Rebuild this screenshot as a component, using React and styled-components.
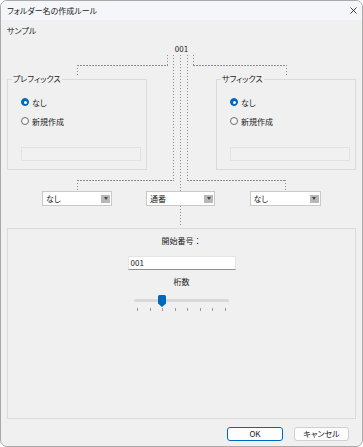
import React from 'react';
import styled, { createGlobalStyle } from 'styled-components';

const GlobalStyle = createGlobalStyle`
  html, body { margin: 0; padding: 0; background: #ffffff; }
  body {
    font-family: "Noto Sans CJK JP", "Noto Sans", sans-serif;
    font-size: 8px;
    color: #1b1b1b;
    font-feature-settings: "palt";
  }
  * { box-sizing: border-box; }
`;

const Window = styled.div`
  width: 363px;
  height: 447px;
  border: 1px solid #a9a9a9;
  border-radius: 7px;
  background: #f0f0f0;
  overflow: hidden;
  display: flex;
  flex-direction: column;
`;

const TitleBar = styled.div`
  height: 19px;
  flex: none;
  display: flex;
  align-items: center;
  justify-content: space-between;
  padding: 0 5px 0 6px;
  background: #f4f6f9;
  line-height: 10px;
`;

const CloseIcon = styled.svg`
  width: 7px;
  height: 7px;
  display: block;
`;

const Body = styled.div`
  flex: 1;
  display: flex;
  flex-direction: column;
  padding: 0 6px;
  min-height: 0;
`;

const SectionLabel = styled.div`
  margin-top: 6px;
  line-height: 10px;
`;

const Diagram = styled.div`
  position: relative;
  display: flex;
  flex-direction: column;
  padding-bottom: 22px;
`;

const Wires = styled.svg`
  position: absolute;
  left: 0;
  top: 0;
  width: 100%;
  height: 100%;
  pointer-events: none;
  overflow: visible;
`;

const SampleValue = styled.div`
  margin-top: 8px;
  line-height: 10px;
  text-align: center;
`;

const GroupsRow = styled.div`
  margin-top: 20px;
  display: flex;
  justify-content: space-between;
`;

const Group = styled.fieldset`
  width: 140px;
  height: 96px;
  margin: 0;
  padding: 0;
  min-width: 0;
  border: 1px solid #dadada;
`;

const Legend = styled.legend`
  margin-left: 4px;
  padding: 0 1px;
  line-height: 10px;
`;

const GroupContent = styled.div`
  padding: 12px 0 0 13px;
  display: flex;
  flex-direction: column;
`;

const RadioRow = styled.div`
  height: 12px;
  display: flex;
  align-items: center;
  gap: 3px;
  & + & { margin-top: 7px; }
`;

const RadioDot = styled.span`
  width: 8px;
  height: 8px;
  border-radius: 50%;
  flex: none;
  background: ${p => (p.$checked ? '#0067c0' : '#f7f7f7')};
  border: 1px solid ${p => (p.$checked ? '#0067c0' : '#6b6b6b')};
  display: flex;
  align-items: center;
  justify-content: center;
  &::after {
    content: '';
    display: ${p => (p.$checked ? 'block' : 'none')};
    width: 3px;
    height: 3px;
    border-radius: 50%;
    background: #ffffff;
  }
`;

const DisabledInput = styled.div`
  margin-top: 20px;
  width: 120px;
  height: 14px;
  border: 1px solid #e2e2e2;
  background: #f1f1f1;
`;

const DropRow = styled.div`
  margin-top: 21px;
  display: grid;
  grid-template-columns: 140px 1fr 140px;
`;

const Select = styled.div`
  justify-self: center;
  width: ${p => p.$w || 70}px;
  height: 15px;
  background: #ffffff;
  border: 1px solid #c9c9c9;
  display: flex;
  align-items: center;
  justify-content: space-between;
  padding: 0 1px 0 3px;
  line-height: 10px;
  transform: translateX(${p => p.$dx || 0}px);
`;

const SelectArrow = styled.span`
  width: 9px;
  height: 8px;
  background: #b8b8b8;
  display: flex;
  align-items: center;
  justify-content: center;
  &::after {
    content: '';
    border-left: 2.5px solid transparent;
    border-right: 2.5px solid transparent;
    border-top: 3px solid #4a4a4a;
  }
`;

const Panel = styled.div`
  flex: 1;
  border: 1px solid #dadada;
  display: flex;
  flex-direction: column;
  align-items: center;
`;

const PanelLabel = styled.div`
  margin-top: ${p => p.$mt}px;
  line-height: 10px;
  font-feature-settings: ${p => (p.$full ? 'normal' : '"palt"')};
`;

const TextInput = styled.div`
  margin-top: 10px;
  width: 108px;
  height: 14px;
  background: #ffffff;
  border: 1px solid #e4e4e4;
  border-bottom-color: #8f8f8f;
  padding-left: 2px;
  line-height: 12px;
`;

const Slider = styled.div`
  margin-top: 8px;
  width: 95px;
  height: 17px;
  position: relative;
`;

const Track = styled.div`
  margin-top: 4px;
  height: 3px;
  border-radius: 2px;
  background: #d8d8d8;
`;

const Ticks = styled.div`
  margin-top: 6px;
  padding: 0 3px;
  display: flex;
  justify-content: space-between;
`;

const Tick = styled.span`
  width: 1px;
  height: 3px;
  background: #9a9a9a;
`;

const Thumb = styled.svg`
  position: absolute;
  top: 0;
  width: 8px;
  height: 12px;
`;

const Footer = styled.div`
  flex: none;
  display: flex;
  justify-content: flex-end;
  gap: 11px;
  padding: 8px 7px 5px 0;
`;

const Button = styled.button`
  width: ${p => p.$w}px;
  height: 14px;
  margin: 0;
  padding: 0;
  font: inherit;
  font-size: 8px;
  line-height: 10px;
  color: #1b1b1b;
  background: #fdfdfd;
  border: 1px solid ${p => (p.$primary ? '#0067c0' : '#d0d0d0')};
  border-radius: 3px;
`;

function Radio({ checked, children }) {
  return (
    <RadioRow>
      <RadioDot $checked={checked} />
      <span>{children}</span>
    </RadioRow>
  );
}

function Dropdown({ value, w, dx }) {
  return (
    <Select $w={w} $dx={dx}>
      <span>{value}</span>
      <SelectArrow />
    </Select>
  );
}

function Connectors() {
  const V = (x, y1, y2) => (
    <line x1={x + 0.5} y1={y1} x2={x + 0.5} y2={y2} strokeDasharray="1 2" />
  );
  const H = (y, x1, x2) => (
    <line x1={x1} y1={y + 0.5} x2={x2} y2={y + 0.5} strokeDasharray="2 1" />
  );
  return (
    <Wires stroke="#8c8c8c" strokeWidth="1" shapeRendering="crispEdges" fill="none">
      {V(160, 19, 29)}
      {V(186, 19, 29)}
      {H(29, 70, 161)}
      {H(29, 186, 280)}
      {V(70, 29, 40)}
      {V(279, 29, 40)}
      {V(166, 19, 145)}
      {V(180, 19, 145)}
      {V(173, 19, 155)}
      {V(173, 170, 189)}
      {H(144, 70, 167)}
      {H(144, 180, 279)}
      {V(70, 144, 155)}
      {V(278, 144, 155)}
    </Wires>
  );
}

export default function App() {
  const ticks = Array.from({ length: 8 });
  const sliderValue = 2;
  const thumbLeft = 3 + (sliderValue * 87) / 7 - 3.5;
  return (
    <>
      <GlobalStyle />
      <Window>
        <TitleBar>
          <span>フォルダー名の作成ルール</span>
          <CloseIcon viewBox="0 0 7 7">
            <path d="M0.5 0.5 L6.5 6.5 M6.5 0.5 L0.5 6.5" stroke="#2b2b2b" strokeWidth="0.9" />
          </CloseIcon>
        </TitleBar>
        <Body>
          <SectionLabel>サンプル</SectionLabel>
          <Diagram>
            <Connectors />
            <SampleValue>001</SampleValue>
            <GroupsRow>
              <Group>
                <Legend>プレフィックス</Legend>
                <GroupContent>
                  <Radio checked>なし</Radio>
                  <Radio>新規作成</Radio>
                  <DisabledInput />
                </GroupContent>
              </Group>
              <Group>
                <Legend>サフィックス</Legend>
                <GroupContent>
                  <Radio checked>なし</Radio>
                  <Radio>新規作成</Radio>
                  <DisabledInput />
                </GroupContent>
              </Group>
            </GroupsRow>
            <DropRow>
              <Dropdown value="なし" w={70} />
              <Dropdown value="通番" w={69} dx={-1} />
              <Dropdown value="なし" w={71} dx={-1} />
            </DropRow>
          </Diagram>
          <Panel>
            <PanelLabel $mt={7} $full>開始番号：</PanelLabel>
            <TextInput>001</TextInput>
            <PanelLabel $mt={7}>桁数</PanelLabel>
            <Slider>
              <Track />
              <Ticks>
                {ticks.map((_, i) => (
                  <Tick key={i} />
                ))}
              </Ticks>
              <Thumb viewBox="0 0 8 12" style={{ left: `${thumbLeft}px` }}>
                <path d="M1.5 0 H6.5 A1.5 1.5 0 0 1 8 1.5 V8.5 L4 12 L0 8.5 V1.5 A1.5 1.5 0 0 1 1.5 0 Z" fill="#0067c0" />
              </Thumb>
            </Slider>
          </Panel>
          <Footer>
            <Button $primary $w={56}>OK</Button>
            <Button $w={55}>キャンセル</Button>
          </Footer>
        </Body>
      </Window>
    </>
  );
}
